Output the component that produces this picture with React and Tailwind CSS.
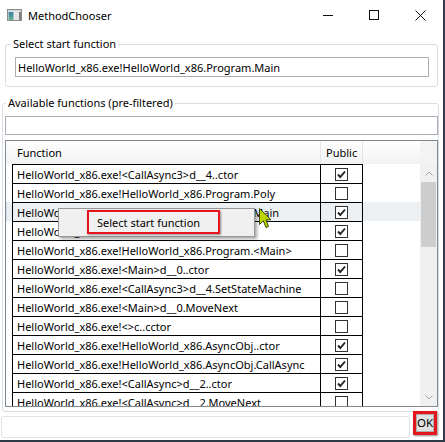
import React from "react";

const rows = [
  ["HelloWorld_x86.exe!<CallAsync3>d__4..ctor", true],
  ["HelloWorld_x86.exe!HelloWorld_x86.Program.Poly", false],
  ["HelloWorld_x86.exe!HelloWorld_x86.Program.Main", true],
  ["HelloWorld_x86.exe!<>c..ctor", true],
  ["HelloWorld_x86.exe!HelloWorld_x86.Program.<Main>", false],
  ["HelloWorld_x86.exe!<Main>d__0..ctor", true],
  ["HelloWorld_x86.exe!<CallAsync3>d__4.SetStateMachine", false],
  ["HelloWorld_x86.exe!<Main>d__0.MoveNext", false],
  ["HelloWorld_x86.exe!<>c..cctor", false],
  ["HelloWorld_x86.exe!HelloWorld_x86.AsyncObj..ctor", true],
  ["HelloWorld_x86.exe!HelloWorld_x86.AsyncObj.CallAsync", true],
  ["HelloWorld_x86.exe!<CallAsync>d__2..ctor", true],
  ["HelloWorld_x86.exe!<CallAsync>d__2.MoveNext", false],
];

function Check({ on }) {
  return (
    <div className="w-[13px] h-[13px] border border-[#333333] bg-white flex items-center justify-center">
      {on && (
        <svg width="11" height="11" viewBox="0 0 11 11">
          <path d="M2 5.5 L4.3 8 L9 2.5" fill="none" stroke="#222" strokeWidth="1.9" />
        </svg>
      )}
    </div>
  );
}

function AppIcon() {
  return (
    <svg width="15" height="12" viewBox="0 0 15 12">
      <defs>
        <linearGradient id="g1" x1="0" y1="0" x2="0" y2="1">
          <stop offset="0" stopColor="#3d7da8" />
          <stop offset="1" stopColor="#62b08e" />
        </linearGradient>
      </defs>
      <rect x="0.5" y="0.5" width="14" height="11" fill="#f1f1f1" stroke="#8c8c8c" />
      <rect x="1" y="1" width="13" height="1.5" fill="#c9d4dc" />
      <rect x="1.5" y="3" width="5" height="8" fill="url(#g1)" />
      <rect x="7.5" y="3" width="4.5" height="8" fill="#e4e4e4" />
      <rect x="12" y="3" width="2" height="8" fill="#7c7c7c" />
    </svg>
  );
}

export default function App() {
  return (
    <div className="w-[445px] h-[442px] bg-white border-r-2 border-b-2 border-[#2e3a46] flex flex-col relative overflow-hidden font-['Noto_Sans',sans-serif] text-[11px] text-black leading-none">
      {/* Title bar */}
      <div className="h-[30px] flex items-center shrink-0">
        <div className="ml-[7px] flex items-center">
          <AppIcon />
        </div>
        <span className="ml-[6px] text-[11px]">MethodChooser</span>
        <div className="ml-auto flex">
          <div className="w-[46px] h-[30px] flex items-center justify-center">
            <svg width="10" height="10" viewBox="0 0 10 10">
              <path d="M0 5.5 H10" stroke="#111" strokeWidth="1" />
            </svg>
          </div>
          <div className="w-[46px] h-[30px] flex items-center justify-center">
            <svg width="10" height="10" viewBox="0 0 10 10">
              <rect x="0.5" y="0.5" width="9" height="9" fill="none" stroke="#111" strokeWidth="1" />
            </svg>
          </div>
          <div className="w-[46px] h-[30px] flex items-center justify-center">
            <svg width="11" height="11" viewBox="0 0 11 11">
              <path d="M0.5 0.5 L10.5 10.5 M10.5 0.5 L0.5 10.5" stroke="#111" strokeWidth="1" />
            </svg>
          </div>
        </div>
      </div>

      {/* Group 1 */}
      <fieldset className="mt-[6px] ml-[5px] mr-[5px] border border-[#d5dfe5] rounded-[3px]">
        <legend className="ml-[5px] px-[2px] leading-[16px]">Select start function</legend>
        <div className="pt-[5px] pl-[9px] pr-[8px] pb-[9px]">
          <div className="h-[20px] border border-[#abadb3] pl-[2px] flex items-center">
            HelloWorld_x86.exe!HelloWorld_x86.Program.Main
          </div>
        </div>
      </fieldset>

      {/* Group 2 */}
      <fieldset className="mt-[8px] ml-[2px] mr-[4px] border border-[#d5dfe5] rounded-[3px]">
        <legend className="ml-[3px] px-[2px] leading-[16px]">Available functions (pre-filtered)</legend>
        <div className="pt-[5px] pl-[2px] pb-[4px]">
          <div className="h-[19px] border border-[#abadb3]" />
          <div className="mt-[5px] h-[267px] border border-[#828790] flex overflow-hidden">
            <div className="flex-1 flex flex-col overflow-hidden">
              {/* header */}
              <div className="h-[23px] shrink-0 flex bg-linear-to-b from-white to-[#f1f2f3]">
                <div className="w-[6px]" />
                <div className="w-[309px] border-r border-[#e3e5e8] pl-[5px] flex items-center">Function</div>
                <div className="w-[42px] border-r border-[#e3e5e8] pl-[5px] flex items-center">Public</div>
                <div className="flex-1" />
              </div>
              {rows.map(([t, on], i) => (
                <div key={i} className={"h-[19px] shrink-0 flex " + (i === 2 ? "bg-[#edf0f3]" : "")}>
                  <div className={"w-[6px] " + (i === 2 ? "border-l border-[#c9dcec]" : "")} />
                  <div className="w-[308px] border-l border-t border-black pl-[4px] flex items-center whitespace-nowrap overflow-hidden">
                    {t}
                  </div>
                  <div className="w-[43px] border-l border-r border-t border-black flex items-center justify-center">
                    <Check on={on} />
                  </div>
                  <div className="flex-1" />
                </div>
              ))}
            </div>
            {/* scrollbar */}
            <div className="w-[17px] shrink-0 bg-[#f0f0f0] flex flex-col">
              <div className="h-[23px] shrink-0 bg-[#f3f3f3]" />
              <div className="h-[18px] shrink-0 flex items-center justify-center">
                <svg width="8" height="5" viewBox="0 0 8 5">
                  <path d="M0.5 4.5 L4 1 L7.5 4.5" fill="none" stroke="#a6a6a6" strokeWidth="1" />
                </svg>
              </div>
              <div className="h-[65px] shrink-0 mx-[1px] bg-[#cdcdcd]" />
              <div className="flex-1" />
              <div className="h-[17px] shrink-0 flex items-center justify-center">
                <svg width="8" height="5" viewBox="0 0 8 5">
                  <path d="M0.5 0.5 L4 4 L7.5 0.5" fill="none" stroke="#a6a6a6" strokeWidth="1" />
                </svg>
              </div>
            </div>
          </div>
        </div>
      </fieldset>

      {/* Bottom row */}
      <div className="flex">
        <div className="flex-1 ml-[1px] mr-[3px] mt-[4px] h-[22px] border border-[#dfe3e6] rounded-[3px]" />
        <div className="-mt-[1px] mr-[6px] w-[24px] h-[24px] border-[3px] border-[#e4151b] shadow-[1px_1px_2px_rgba(0,0,0,0.45)]">
          <div className="w-full h-full bg-[#e1e1e1] border border-[#adadad] flex items-center justify-center text-[11.5px]">
            OK
          </div>
        </div>
      </div>

      {/* Context menu */}
      <div className="absolute left-[58px] top-[208px] w-[197px] h-[29px] bg-[#f0f0f0] border border-[#979797] shadow-[2px_2px_3px_rgba(0,0,0,0.35)]">
        <div className="ml-[28px] mt-[1px] w-[133px] h-[24px] border-2 border-[#e4151b] shadow-[1px_1px_2px_rgba(0,0,0,0.4)] pl-[8px] flex items-center">
          Select start function
        </div>
      </div>

      {/* Cursor */}
      <div className="absolute left-[259px] top-[208px]">
        <svg width="13" height="21" viewBox="0 0 13 21">
          <path d="M0.5 0.5 L0.5 16.5 L4.3 12.8 L7 19.5 L9.5 18.4 L6.9 11.8 L12 11.8 Z" fill="#bcd400" stroke="#3b4a00" strokeWidth="1" />
        </svg>
      </div>
    </div>
  );
}
